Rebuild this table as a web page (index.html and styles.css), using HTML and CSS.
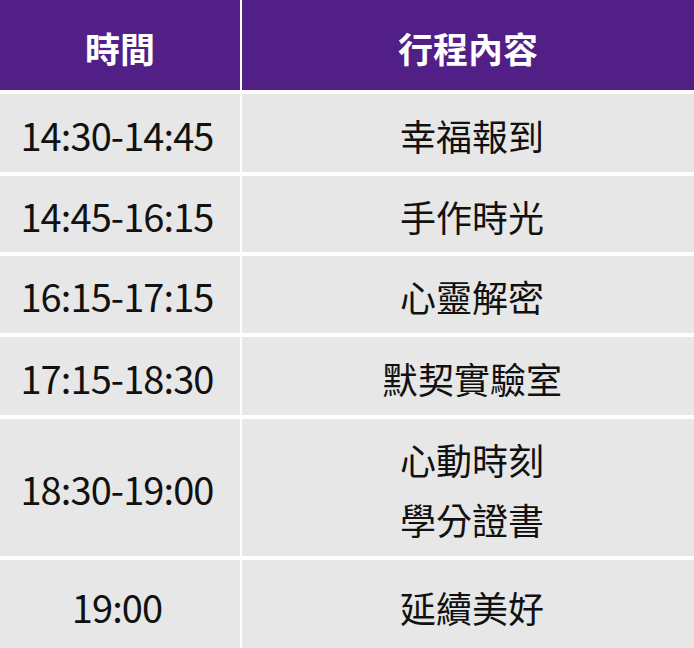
FILE: index.html
```html
<!DOCTYPE html>
<html lang="zh-Hant">
<head>
<meta charset="utf-8">
<title>行程表</title>
<link rel="stylesheet" href="styles.css">
</head>
<body>
<div class="schedule">
  <div class="cell head">時間</div>
  <div class="cell head">行程內容</div>

  <div class="cell time">14:30-14:45</div>
  <div class="cell item">幸福報到</div>

  <div class="cell time">14:45-16:15</div>
  <div class="cell item">手作時光</div>

  <div class="cell time">16:15-17:15</div>
  <div class="cell item">心靈解密</div>

  <div class="cell time">17:15-18:30</div>
  <div class="cell item">默契實驗室</div>

  <div class="cell time">18:30-19:00</div>
  <div class="cell item multi"><span>心動時刻</span><span>學分證書</span></div>

  <div class="cell time">19:00</div>
  <div class="cell item">延續美好</div>
</div>
</body>
</html>
```

FILE: styles.css
```css
html, body {
  margin: 0;
  padding: 0;
  background: #ffffff;
}

body {
  width: 694px;
  height: 648px;
  overflow: hidden;
  font-family: "Noto Sans CJK TC", "Noto Sans", sans-serif;
}

.schedule {
  display: grid;
  grid-template-columns: 240px 1fr;
  grid-template-rows: 90px 78px 76px 77px 78px 137px 90px;
  column-gap: 2px;
  row-gap: 4px;
  background: #ffffff;
}

.cell {
  display: flex;
  align-items: center;
  justify-content: center;
  background: #e7e7e7;
  color: #111111;
  font-size: 36px;
  line-height: 1;
}

.head {
  background: #521f86;
  color: #ffffff;
  font-weight: 700;
  font-size: 35px;
  padding-top: 4px;
}

.time {
  font-size: 38px;
  letter-spacing: -0.9px;
  padding-top: 3px;
  padding-right: 6px;
}

.item {
  padding-top: 3px;
  padding-left: 8px;
}

.multi {
  flex-direction: column;
  line-height: 60px;
}
```
